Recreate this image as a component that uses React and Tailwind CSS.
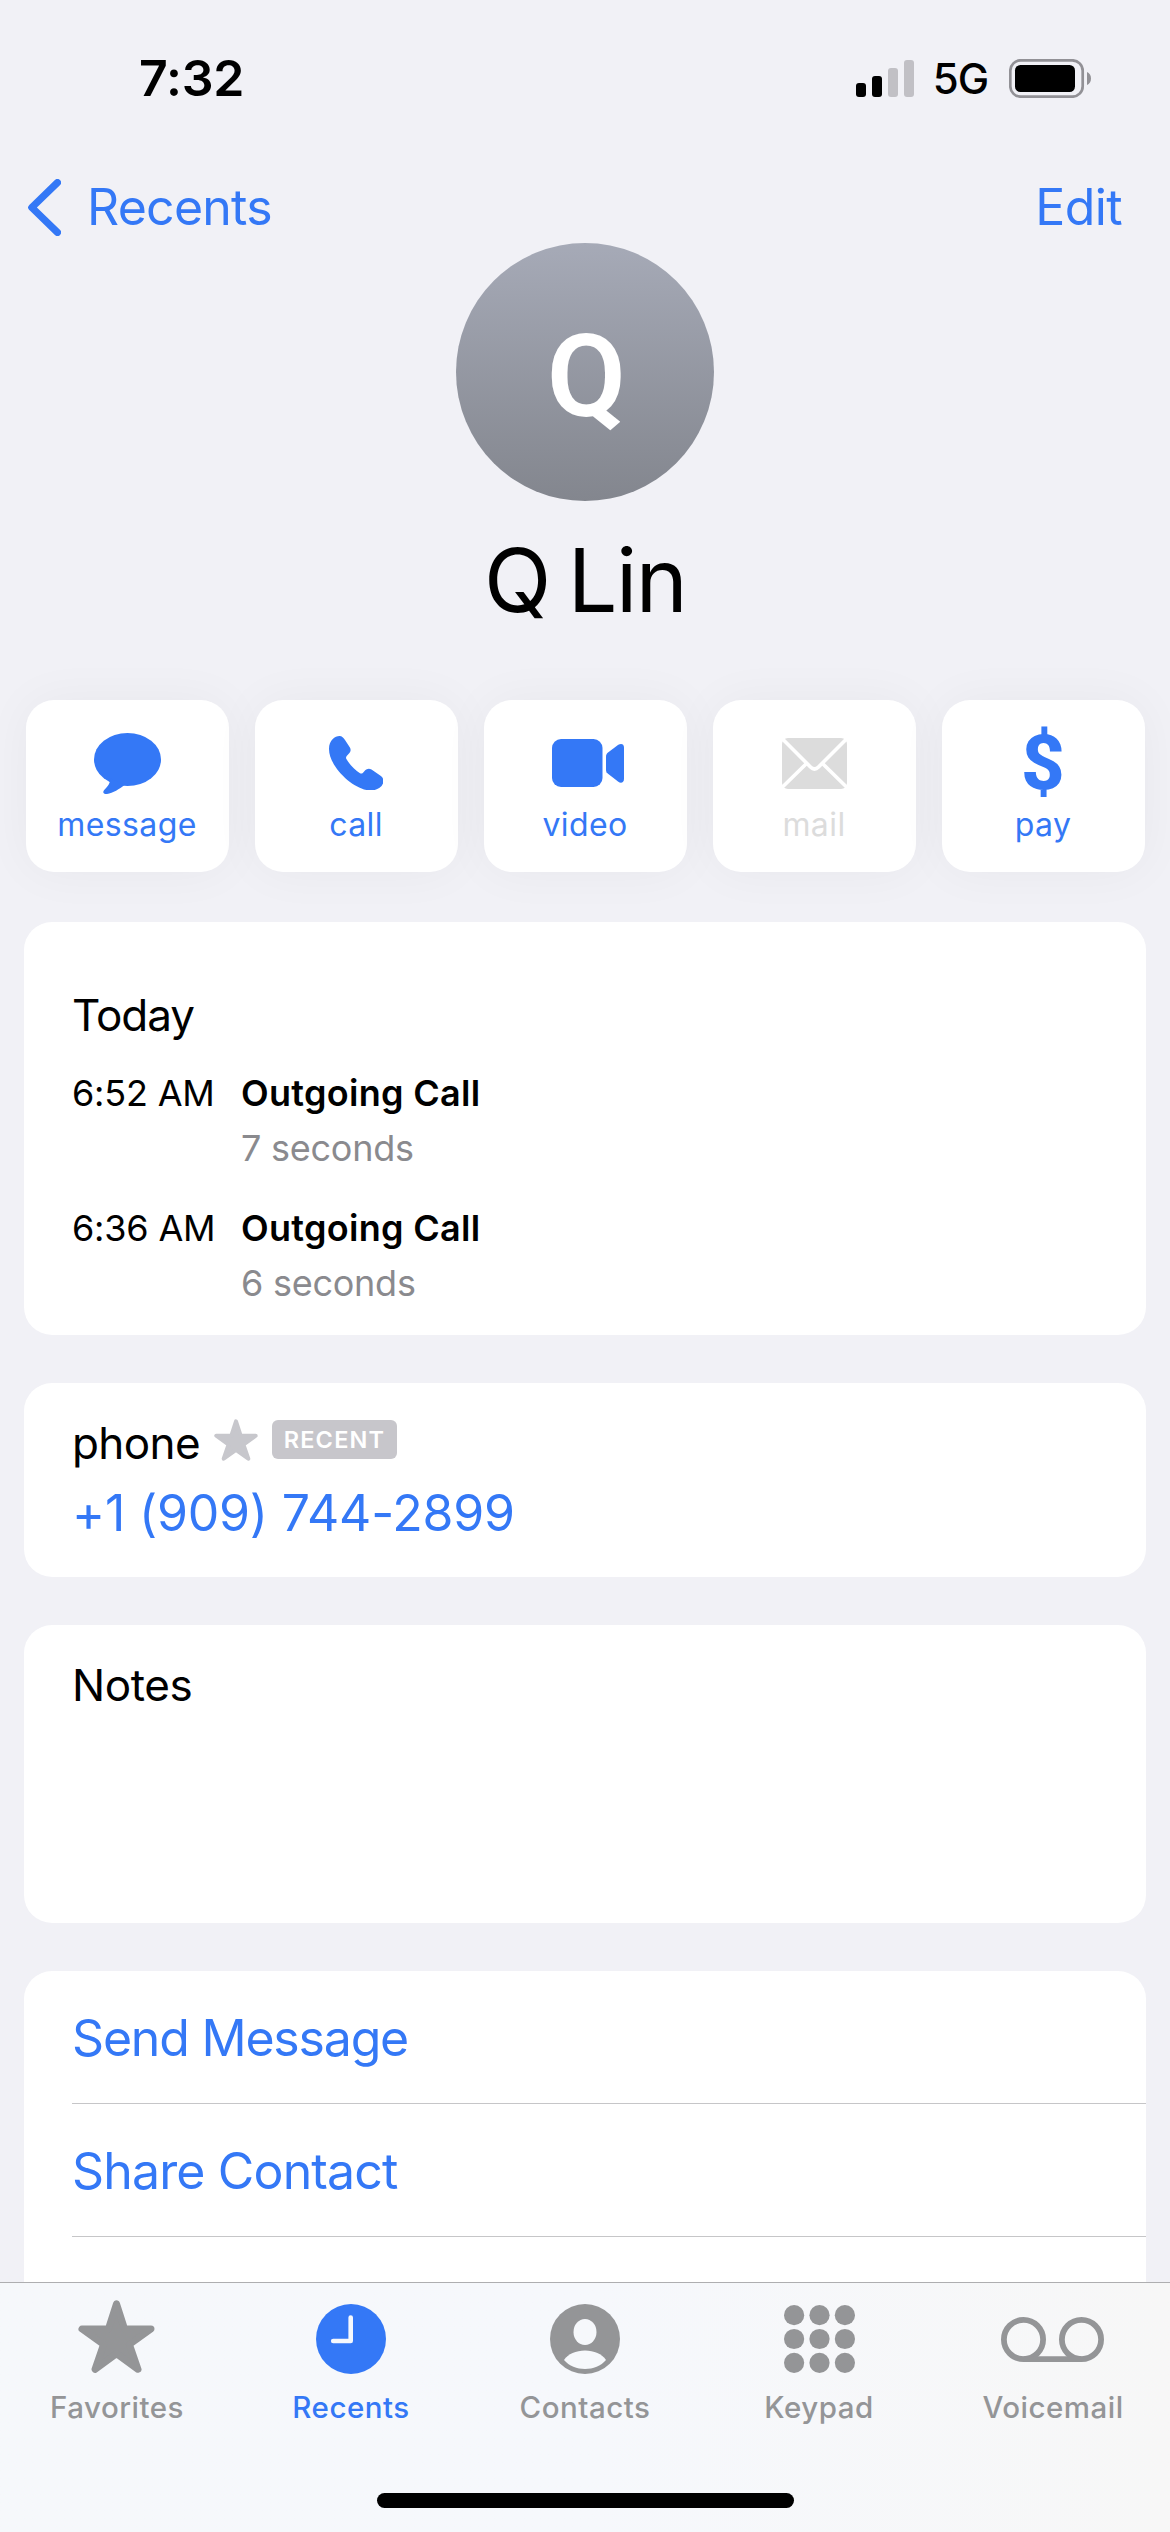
import React from 'react';

const calls = [
  { time: '6:52 AM', type: 'Outgoing Call', duration: '7 seconds' },
  { time: '6:36 AM', type: 'Outgoing Call', duration: '6 seconds' },
];

const StarIcon = ({ className }) => (
  <svg viewBox="0 0 77 73" className={className} fill="currentColor" stroke="currentColor" strokeWidth="7" strokeLinejoin="round">
    <path d="M38.5 3.8 46.6 29H73L51.4 44.4 60 69.3 38.5 53.7 17 69.3 25.6 44.4 4 29H30.4Z" />
  </svg>
);

const MessageIcon = () => (
  <svg viewBox="0 0 67 61" className="w-[67px] h-[61px]" fill="currentColor">
    <ellipse cx="33.5" cy="26.5" rx="33.5" ry="26.5" />
    <path d="M16 45C16.8 50 13.5 53.5 10 57.3C8.2 59.7 10 61.4 13 61C19 60 25.5 56 30.5 52Z" />
  </svg>
);

const PhoneIcon = () => (
  <svg viewBox="0 0 54.5 54.5" className="w-[54.5px] h-[54.5px]" fill="currentColor">
    <path d="M0 13C0 4 6 0 10.5 0C13 0 14.5 2 16 4L20.6 11C22.2 13.5 21.8 15.5 20.2 17.3L17.7 20C16.6 21.5 17 22.5 17.7 23.6C21 29 26 34 31 37.2C32 37.8 33 37.7 34 36.7L36 34.6C38 32.5 40 32 42.5 33.5L51.2 39.5C54 41.5 54.8 43.5 54.2 47C52.5 52.5 46 54.5 42 54.5C25 54.5 0 31 0 13Z" />
  </svg>
);

const VideoIcon = () => (
  <svg viewBox="0 0 72 48" className="ml-[6px] w-[72px] h-[48px]" fill="currentColor">
    <rect width="50.5" height="48" rx="9" />
    <path d="M54 17.5C54 15.5 54.8 14.4 56 13.4L66.3 5.8C69 4 72 5 72 8.2V40C72 43.5 69 44.8 66.3 42.8L56 34.8C54.8 33.8 54 32.7 54 30.7Z" />
  </svg>
);

const MailIcon = () => (
  <svg viewBox="0 0 65 51" className="w-[65px] h-[51px]" fill="currentColor">
    <rect width="65" height="51" rx="6" />
    <g fill="none" stroke="#fff" strokeWidth="3.6">
      <path d="M0 0.5 28.5 29Q32.5 33 36.5 29L65 0.5" />
      <path d="M0 49.5 24.5 25.5M65 49.5 40.5 25.5" />
    </g>
  </svg>
);

const PayIcon = () => <span className="font-['Roboto',sans-serif] text-[76px] leading-[71px] font-extrabold">$</span>;

const ClockIcon = () => (
  <svg viewBox="0 0 70 70" className="size-[70px]">
    <circle cx="35" cy="35" r="35" fill="currentColor" />
    <path d="M34.7 13.5V37H17.2" fill="none" stroke="#f5f8fd" strokeWidth="4.6" strokeLinecap="round" strokeLinejoin="round" />
  </svg>
);

const PersonIcon = () => (
  <svg viewBox="0 0 70 70" className="size-[70px]">
    <circle cx="35" cy="35" r="35" fill="currentColor" />
    <ellipse cx="35" cy="28" rx="11.5" ry="13" fill="#f6f8fb" />
    <path d="M14 56C18 50 26 46.5 35 46.5C44 46.5 52 50 56 56C51 62 43 65 35 65C27 65 19 62 14 56Z" fill="#f6f8fb" />
  </svg>
);

const KeypadIcon = () => (
  <svg viewBox="0 0 71 68" className="w-[71px] h-[68px]" fill="currentColor">
    {[10.2, 34, 57.8].map((y) =>
      [10.1, 35.5, 60.9].map((x) => <circle key={`${x}-${y}`} cx={x} cy={y} r="10.1" />)
    )}
  </svg>
);

const VoicemailIcon = () => (
  <svg viewBox="0 0 103 45" className="mr-[2px] w-[103px] h-[45px]" fill="none" stroke="currentColor" strokeWidth="5.8">
    <circle cx="22.5" cy="22.5" r="19.6" />
    <circle cx="80.5" cy="22.5" r="19.6" />
    <path d="M22.5 42.1H80.5" />
  </svg>
);

const actions = [
  { label: 'message', icon: MessageIcon },
  { label: 'call', icon: PhoneIcon },
  { label: 'video', icon: VideoIcon },
  { label: 'mail', icon: MailIcon, disabled: true },
  { label: 'pay', icon: PayIcon },
];

const tabs = [
  { label: 'Favorites', icon: () => <StarIcon className="w-[77px] h-[73px] mb-[5px] mr-[1px]" /> },
  { label: 'Recents', icon: ClockIcon, active: true },
  { label: 'Contacts', icon: PersonIcon },
  { label: 'Keypad', icon: KeypadIcon },
  { label: 'Voicemail', icon: VoicemailIcon },
];

const StatusBar = () => (
  <div className="h-[156px] shrink-0 flex items-center justify-between pl-[139px] pr-[79px] text-black">
    <span className="text-[50px] font-semibold tracking-[-0.2px]">7:32</span>
    <div className="flex items-center">
      <svg viewBox="0 0 58 37" className="w-[58px] h-[37px]">
        <rect x="0" y="23" width="10" height="14" rx="3" />
        <rect x="16" y="16" width="10" height="21" rx="3" />
        <rect x="32" y="8" width="10" height="29" rx="3" fill="#c1c0c5" />
        <rect x="48" y="0" width="10" height="37" rx="3" fill="#c1c0c5" />
      </svg>
      <span className="ml-[18px] w-[57px] text-[42px] text-center font-medium tracking-[-1px] leading-none pt-[2px]">5G</span>
      <svg viewBox="0 0 82 39" className="ml-[20px] w-[82px] h-[39px]">
        <rect x="1.3" y="1.3" width="72.4" height="36.4" rx="10.5" fill="none" stroke="#929196" strokeWidth="2.7" />
        <rect x="6" y="6" width="60" height="27" rx="5.5" />
        <path d="M78 13C80.5 14 82 16.5 82 19.5S80.5 25 78 26Z" fill="#929196" />
      </svg>
    </div>
  </div>
);

export default function App() {
  return (
    <div className="w-[1170px] h-[2532px] flex flex-col overflow-hidden bg-[#f1f1f6] text-black font-['Inter',sans-serif]">
      <StatusBar />

      <div className="flex-1 min-h-0 overflow-hidden">
        {/* Nav */}
        <div className="h-[87px] pt-[15px] pl-[28px] pr-[48px] flex items-center justify-between text-[50px] text-[#3478f6]">
          <button className="flex items-center gap-[26px]">
            <svg viewBox="0 0 33 57" className="w-[33px] h-[57px]" fill="none" stroke="currentColor" strokeWidth="7.2" strokeLinecap="round" strokeLinejoin="round">
              <path d="M29.4 3.6 3.8 28.5 29.4 53.4" />
            </svg>
            <span className="tracking-[-0.75px]">Recents</span>
          </button>
          <button className="tracking-[-0.6px]">Edit</button>
        </div>

        {/* Contact header */}
        <div className="flex flex-col items-center">
          <div className="size-[258px] rounded-full bg-linear-to-b from-[#a6aab7] to-[#83868e] flex items-center justify-center pt-[8px] pl-[3px] text-white font-['Roboto',sans-serif] text-[115px] leading-none font-semibold">
            Q
          </div>
          <h1 className="h-[156px] text-[88px] leading-[158px] tracking-[-1.6px] [word-spacing:-5px]">Q Lin</h1>
        </div>

        {/* Quick actions */}
        <div className="mt-[43px] px-[25.5px] flex gap-[26px]">
          {actions.map(({ label, icon: Icon, disabled }) => (
            <button
              key={label}
              className={`flex-1 h-[172px] rounded-[28px] bg-white shadow-[0_0_50px_rgba(0,0,0,0.045)] flex flex-col items-center ${disabled ? 'text-[#dcdcdc]' : 'text-[#3478f6]'}`}
            >
              <span className="h-[100px] mt-[13px] flex items-center justify-center">
                <Icon />
              </span>
              <span className="text-[32px] leading-[24px] tracking-[0.4px]">{label}</span>
            </button>
          ))}
        </div>

        <div className="mt-[50px] px-[24px] flex flex-col gap-[48px]">
          {/* Call history */}
          <section className="h-[413px] rounded-[28px] bg-white pl-[48px] pt-[66px]">
            <h2 className="text-[44px] leading-[54px] tracking-[-1px]">Today</h2>
            <div className="mt-[24px] flex flex-col gap-[26px]">
              {calls.map((call) => (
                <div key={call.time} className="h-[109px] flex text-[36px]">
                  <span className="w-[169px] leading-[54px] tracking-[-0.2px]">{call.time}</span>
                  <div>
                    <p className="leading-[54px] font-semibold tracking-[0.3px]">{call.type}</p>
                    <p className="leading-[57px] text-[#8a8a8e] tracking-[-0.25px]">{call.duration}</p>
                  </div>
                </div>
              ))}
            </div>
          </section>

          {/* Phone number */}
          <section className="h-[194px] rounded-[28px] bg-white pl-[48px] pt-[30px]">
            <div className="h-[60px] flex items-center">
              <span className="w-[142px] text-[44px] tracking-[-0.6px]">phone</span>
              <StarIcon className="w-[44px] h-[42px] mb-[6px] text-[#c7c7cc]" />
              <span className="ml-[14px] mb-[8px] w-[125px] h-[39px] rounded-[6px] bg-[#c7c6cb] text-white text-[23.5px] leading-[39px] font-semibold text-center tracking-[1.2px]">
                RECENT
              </span>
            </div>
            <p className="text-[50px] leading-[80px] tracking-[-0.2px] text-[#3478f6]">+1 (909) 744-2899</p>
          </section>

          {/* Notes */}
          <section className="h-[298px] rounded-[28px] bg-white pl-[48px] pt-[30px]">
            <h2 className="text-[44px] leading-[60px] tracking-[-0.4px]">Notes</h2>
          </section>

          <section className="h-[420px] rounded-t-[28px] bg-white pl-[48px] text-[50px] text-[#3478f6]">
            <p className="h-[133px] leading-[134px] border-b border-[#c6c6c8] tracking-[-1.2px]">Send Message</p>
            <p className="h-[133px] leading-[134px] border-b border-[#c6c6c8] tracking-[-0.85px]">Share Contact</p>
          </section>
        </div>
      </div>

      {/* Tab bar */}
      <div className="h-[250px] shrink-0 border-t border-[#aeaeb0] bg-linear-to-r from-[#f6f8fb] via-[#f6f8fc] to-[#f7f7f7] flex flex-col items-center">
        <nav className="w-full flex">
          {tabs.map(({ label, icon: Icon, active }) => (
            <div key={label} className={`flex-1 flex flex-col items-center ${active ? 'text-[#3478f6]' : 'text-[#949597]'}`}>
              <span className="h-[112px] flex items-center">
                <Icon />
              </span>
              <span className="-mt-px text-[29.5px] leading-[26px] font-medium tracking-[0.5px]">{label}</span>
            </div>
          ))}
        </nav>
        <div className="mt-[73px] w-[417px] h-[15px] rounded-full bg-black" />
      </div>
    </div>
  );
}
